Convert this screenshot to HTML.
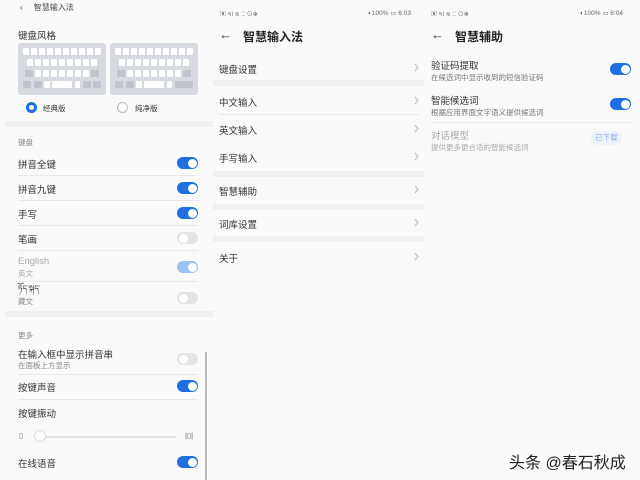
<!DOCTYPE html><html><head><meta charset="utf-8"><style>
*{margin:0;padding:0;box-sizing:border-box}
body{width:640px;height:480px;background:#fafafa;position:relative;overflow:hidden;font-family:"Liberation Sans","Noto Sans CJK SC",sans-serif;color:#222}
.a{position:absolute;white-space:nowrap}
.t{font-size:9.5px;color:#333}
.s{font-size:7.5px;color:#888}
.tg{position:absolute;width:21px;height:12px;border-radius:6px;background:#1f6fe3}
.tg::after{content:"";position:absolute;right:1.5px;top:1.5px;width:9px;height:9px;border-radius:50%;background:#fff}
.off{background:#e4e4e4}.off::after{left:1.5px;right:auto}
.lt{background:#9cc2f2}
.band{position:absolute;height:6px;background:#f0f0f0}
.ln{position:absolute;height:1px;background:#e8e8e8}
.kb{position:absolute;width:88px;height:52px;background:#d6d9df;border-radius:3px;padding:5px 4px}
.r{display:flex;justify-content:center;gap:2.5px;margin-bottom:4px}
.r i{display:block;width:5.5px;height:7px;background:#fff;border-radius:1px}
.r i.g{background:#bfc4cc;width:8px}
.r i.w{width:20px}
.cv{position:absolute;width:5px;height:9px}
</style></head><body>
<!-- panel 1 -->
<div class="a" style="left:20px;top:2px;font-size:8px;color:#444">‹ &nbsp;&nbsp;&nbsp; 智慧输入法</div>
<div class="a t" style="left:18px;top:28px">键盘风格</div>
<div class="kb" style="left:18px;top:43px">
<div class="r"><i></i><i></i><i></i><i></i><i></i><i></i><i></i><i></i><i></i><i></i></div>
<div class="r"><i></i><i></i><i></i><i></i><i></i><i></i><i></i><i></i><i></i></div>
<div class="r"><i class="g"></i><i></i><i></i><i></i><i></i><i></i><i></i><i></i><i class="g"></i></div>
<div class="r"><i class="g"></i><i class="g"></i><i></i><i class="w"></i><i></i><i class="g"></i><i class="g"></i></div></div>
<div class="kb" style="left:110px;top:43px">
<div class="r"><i></i><i></i><i></i><i></i><i></i><i></i><i></i><i></i><i></i><i></i></div>
<div class="r"><i></i><i></i><i></i><i></i><i></i><i></i><i></i><i></i><i></i></div>
<div class="r"><i class="g"></i><i></i><i></i><i></i><i></i><i></i><i></i><i></i><i class="g"></i></div>
<div class="r"><i class="g"></i><i class="g"></i><i></i><i class="w"></i><i></i><i class="g" style="width:18px"></i></div></div>
<div class="a" style="left:26px;top:102px;width:11px;height:11px;border-radius:50%;border:3px solid #1f6fe3"></div>
<div class="a s" style="left:43px;top:103px;color:#333">经典版</div>
<div class="a" style="left:117px;top:102px;width:11px;height:11px;border-radius:50%;border:1px solid #bbb"></div>
<div class="a s" style="left:135px;top:103px;color:#333">纯净版</div>
<div class="band" style="left:5px;width:208px;top:121px"></div>
<div class="a s" style="left:18px;top:137px">键盘</div>
<div class="a t" style="left:18px;top:157px">拼音全键</div><div class="tg" style="left:177px;top:157px"></div>
<div class="ln" style="left:18px;width:180px;top:175px"></div>
<div class="a t" style="left:18px;top:182px">拼音九键</div><div class="tg" style="left:177px;top:182px"></div>
<div class="ln" style="left:18px;width:180px;top:200px"></div>
<div class="a t" style="left:18px;top:207px">手写</div><div class="tg" style="left:177px;top:207px"></div>
<div class="ln" style="left:18px;width:180px;top:225px"></div>
<div class="a t" style="left:18px;top:232px">笔画</div><div class="tg off" style="left:177px;top:232px"></div>
<div class="ln" style="left:18px;width:180px;top:250px"></div>
<div class="a t" style="left:18px;top:256px;color:#aaa">English</div><div class="a s" style="left:18px;top:268px;color:#aaa">英文</div><div class="tg lt" style="left:177px;top:261px"></div>
<div class="ln" style="left:18px;width:180px;top:281px"></div>
<div class="a" style="left:18px;top:284px;font-size:8px;line-height:10px;color:#333">ཏོད་སྐད་</div><div class="a s" style="left:18px;top:296px">藏文</div><div class="tg off" style="left:177px;top:292px"></div>
<div class="band" style="left:5px;width:208px;top:311px"></div>
<div class="a s" style="left:18px;top:330px">更多</div>
<div class="a t" style="left:18px;top:347px">在输入框中显示拼音串</div><div class="a s" style="left:18px;top:360px">在面板上方显示</div><div class="tg off" style="left:177px;top:353px"></div>
<div class="ln" style="left:18px;width:180px;top:374px"></div>
<div class="a t" style="left:18px;top:380px">按键声音</div><div class="tg" style="left:177px;top:380px"></div>
<div class="ln" style="left:18px;width:180px;top:399px"></div>
<div class="a t" style="left:18px;top:406px">按键振动</div>
<div class="a s" style="left:19px;top:431px;color:#666">▯</div>
<div class="ln" style="left:36px;width:140px;top:436px;height:2px;background:#e2e2e2"></div>
<div class="a" style="left:34px;top:430px;width:12px;height:12px;border-radius:50%;background:#fff;border:1px solid #ddd"></div>
<div class="a s" style="left:185px;top:431px;color:#666">|▯|</div>
<div class="a t" style="left:18px;top:456px">在线语音</div><div class="tg" style="left:177px;top:456px"></div>
<div class="a" style="left:205px;top:352px;width:1.5px;height:128px;background:#bbb"></div>
<!-- panel 2 -->
<div class="a" style="left:220px;top:9px;font-size:6px;color:#666">▣ ᵃıl ≋ ⁚⁚ ⊙✻</div>
<div class="a" style="left:368px;top:9px;font-size:6.5px;color:#666">◐100% ▭ 6:03</div>
<div class="a" style="left:219px;top:27px;font-size:13px;color:#333">←</div>
<div class="a" style="left:243px;top:28px;font-size:12px;font-weight:bold;color:#222">智慧输入法</div>
<div class="a t" style="left:219px;top:62px">键盘设置</div><svg class="cv" style="left:414px;top:63px" viewBox="0 0 5 9"><polyline points="1,1 4,4.5 1,8" fill="none" stroke="#bbb" stroke-width="1"/></svg>
<div class="band" style="left:213px;width:211px;top:80px"></div>
<div class="a t" style="left:219px;top:95px">中文输入</div><svg class="cv" style="left:414px;top:96px" viewBox="0 0 5 9"><polyline points="1,1 4,4.5 1,8" fill="none" stroke="#bbb" stroke-width="1"/></svg>
<div class="ln" style="left:219px;width:200px;top:114px"></div>
<div class="a t" style="left:219px;top:123px">英文输入</div><svg class="cv" style="left:414px;top:124px" viewBox="0 0 5 9"><polyline points="1,1 4,4.5 1,8" fill="none" stroke="#bbb" stroke-width="1"/></svg>
<div class="a t" style="left:219px;top:151px">手写输入</div><svg class="cv" style="left:414px;top:152px" viewBox="0 0 5 9"><polyline points="1,1 4,4.5 1,8" fill="none" stroke="#bbb" stroke-width="1"/></svg>
<div class="band" style="left:213px;width:211px;top:171px"></div>
<div class="a t" style="left:219px;top:184px">智慧辅助</div><svg class="cv" style="left:414px;top:185px" viewBox="0 0 5 9"><polyline points="1,1 4,4.5 1,8" fill="none" stroke="#bbb" stroke-width="1"/></svg>
<div class="band" style="left:213px;width:211px;top:204px"></div>
<div class="a t" style="left:219px;top:217px">词库设置</div><svg class="cv" style="left:414px;top:218px" viewBox="0 0 5 9"><polyline points="1,1 4,4.5 1,8" fill="none" stroke="#bbb" stroke-width="1"/></svg>
<div class="band" style="left:213px;width:211px;top:236px"></div>
<div class="a t" style="left:219px;top:251px">关于</div><svg class="cv" style="left:414px;top:252px" viewBox="0 0 5 9"><polyline points="1,1 4,4.5 1,8" fill="none" stroke="#bbb" stroke-width="1"/></svg>
<!-- panel 3 -->
<div class="a" style="left:431px;top:9px;font-size:6px;color:#666">▣ ᵃıl ≋ ⁚⁚ ⊙✻</div>
<div class="a" style="left:580px;top:9px;font-size:6.5px;color:#666">◐100% ▭ 6:04</div>
<div class="a" style="left:431px;top:27px;font-size:13px;color:#333">←</div>
<div class="a" style="left:455px;top:28px;font-size:12px;font-weight:bold;color:#222">智慧辅助</div>
<div class="a t" style="left:431px;top:58px">验证码提取</div><div class="a s" style="left:431px;top:72px;color:#777">在候选词中显示收到的短信验证码</div><div class="tg" style="left:610px;top:63px"></div>
<div class="a t" style="left:431px;top:93px">智能候选词</div><div class="a s" style="left:431px;top:107px;color:#777">根据应用界面文字语义提供候选词</div><div class="tg" style="left:610px;top:98px"></div>
<div class="ln" style="left:431px;width:202px;top:122px"></div>
<div class="a t" style="left:431px;top:128px;color:#aaa">对话模型</div><div class="a s" style="left:431px;top:142px;color:#aaa">提供更多更合适的智能候选词</div>
<div class="a" style="left:591px;top:131px;width:31px;height:14px;border-radius:7px;background:#eef3fa;font-size:7.5px;color:#8db3e8;text-align:center;line-height:14px">已下载</div>
<div class="a" style="left:509px;top:449px;font-size:16px;color:#222">头条 @春石秋成</div>
</body></html>
